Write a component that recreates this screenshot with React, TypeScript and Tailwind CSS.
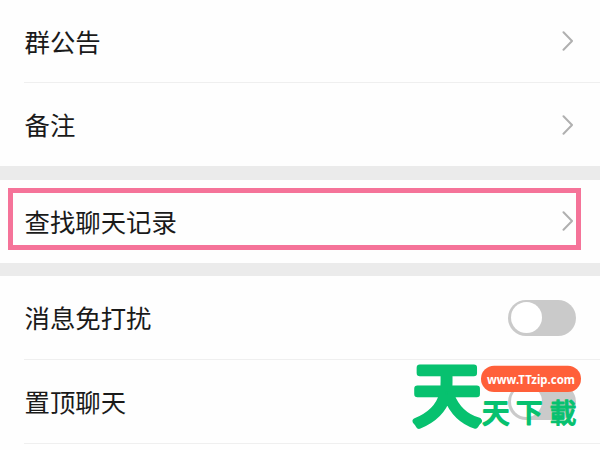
import type { ReactNode } from 'react';

const Chevron: React.FC = () => (
  <svg width="12" height="20" viewBox="0 0 12 20" fill="none" className="mr-[2px]">
    <path
      d="M1.5 1.3 L10 10 L1.5 18.7"
      stroke="#b0b0b0"
      strokeWidth="2"
      strokeLinecap="round"
      strokeLinejoin="round"
    />
  </svg>
);

const Toggle: React.FC = () => (
  <span className="flex h-9 w-[68px] items-center rounded-full bg-[#cacaca] pl-[2.5px]">
    <span className="h-[31px] w-[31px] rounded-full bg-white" />
  </span>
);

interface RowProps {
  label: string;
  divider?: boolean;
  className?: string;
  children: ReactNode;
}

const Row: React.FC<RowProps> = ({ label, divider, className = 'h-[83px]', children }) => (
  <div className={`ml-6 flex shrink-0 items-center justify-between ${divider ? 'border-b border-[#efefef]' : ''} ${className}`}>
    <span className="pl-[0.5px] pt-[1px] text-[25.4px] leading-none">{label}</span>
    {children}
  </div>
);

const Logo: React.FC = () => (
  <div className="absolute left-[408px] top-[356px]">
    <svg width="180" height="80" viewBox="0 0 180 80" className="block overflow-visible">
      <g
        fill="#07c16f"
        stroke="#07c16f"
        strokeLinejoin="round"
        strokeLinecap="round"
        fontFamily="'Noto Sans CJK TC', sans-serif"
      >
        <text x="5" y="64" fontSize="68" fontWeight="400" strokeWidth="6.5">天</text>
        <text x="74.2" y="67.2" fontSize="27" fontWeight="400" strokeWidth="2">天</text>
        <text x="108.2" y="66.2" fontSize="26" fontWeight="400" strokeWidth="2">下</text>
        <text x="141.5" y="67.2" fontSize="27" fontWeight="500" strokeWidth="0.9">載</text>
      </g>
      <rect x="73" y="9.7" width="100" height="26.3" rx="13.1" fill="#ff603a" />
      <text
        x="79"
        y="27.7"
        fontSize="12.5"
        fontWeight="700"
        fill="#fff"
        fontFamily="'Noto Sans', 'Open Sans', sans-serif"
        textLength="88"
        lengthAdjust="spacingAndGlyphs"
      >
        www.TTzip.com
      </text>
    </svg>
  </div>
);

const App: React.FC = () => {
  return (
    <main className="relative flex h-[450px] w-[600px] flex-col overflow-hidden bg-[#fefefe] font-['Noto_Sans_CJK_SC',sans-serif] text-[#1a1a1a]">
      <Row label="群公告" divider className="h-[83px] pr-6">
        <Chevron />
      </Row>
      <Row label="备注" className="h-[83px] pr-6">
        <Chevron />
      </Row>
      <div className="h-[14px] shrink-0 bg-[#ebebeb]" />
      <div className="flex h-[83px] shrink-0 pl-2 pt-2">
        <div className="flex h-[62px] w-[573px] items-center justify-between border-[5px] border-[#f57399] pl-[11.5px] pt-[4px]">
          <span className="pt-[1px] text-[25.4px] leading-none">查找聊天记录</span>
          <Chevron />
        </div>
      </div>
      <div className="h-[13px] shrink-0 bg-[#ebebeb]" />
      <Row label="消息免打扰" divider className="h-[84px] pr-6">
        <Toggle />
      </Row>
      <Row label="置顶聊天" divider className="h-[84px] pr-6">
        <Toggle />
      </Row>
      <Logo />
    </main>
  );
};

export default App;
